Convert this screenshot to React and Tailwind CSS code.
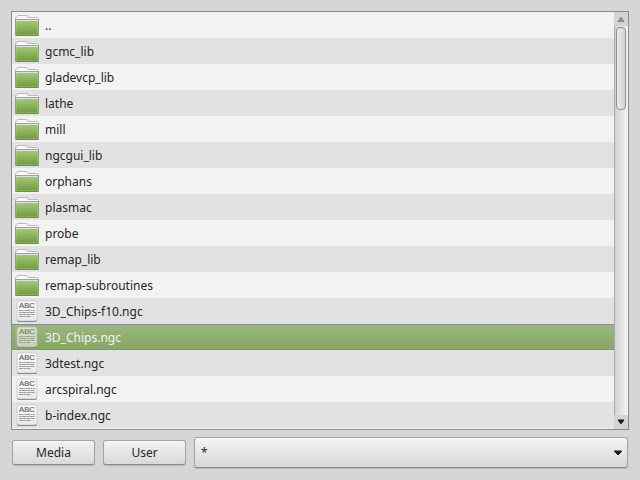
const ENTRIES = [
  '..', 'gcmc_lib', 'gladevcp_lib', 'lathe', 'mill', 'ngcgui_lib', 'orphans', 'plasmac',
  'probe', 'remap_lib', 'remap-subroutines', '3D_Chips-f10.ngc', '3D_Chips.ngc',
  '3dtest.ngc', 'arcspiral.ngc', 'b-index.ngc',
];
const SELECTED = '3D_Chips.ngc';

function FolderIcon() {
  return (
    <svg width="24" height="21" viewBox="0 0 24 21" className="block">
      <defs>
        <linearGradient id="folder" x1="0" y1="0" x2="0" y2="1">
          <stop offset="0" stopColor="#a3c877" />
          <stop offset="1" stopColor="#709a3c" />
        </linearGradient>
      </defs>
      <path d="M.5 20V2.500H1.500L2.500.5H12L13 2.500H22.500L23.500 3.500V20" fill="#fbfbfb" stroke="#b9b9b9" />
      <rect x="1" y="5" width="22" height="1" fill="#dfe5d8" />
      <rect x="1" y="6" width="22" height="14" fill="url(#folder)" />
      <path d="M1.500 6V19.500H22.500V6" fill="none" stroke="#b5d58d" strokeOpacity=".3" />
      <path d="M.5 4V20.500H23.500V4" fill="none" stroke="#929a8a" />
      <path d="M0 4.500H24" stroke="#a0a0a0" />
      <path d="M1 20.500H23" stroke="#73875c" />
    </svg>
  );
}

function FileIcon({ selected }) {
  return (
    <svg width="24" height="24" viewBox="0 0 24 24" className={selected ? 'block opacity-65' : 'block'}>
      <defs>
        <linearGradient id="paper" x1="0" y1="0" x2="0" y2="1">
          <stop offset="0" stopColor="#fcfcfc" />
          <stop offset="1" stopColor="#e8e8e8" />
        </linearGradient>
      </defs>
      <rect x="2" y="3" width="20" height="20" rx="2.500" fill="#444" opacity=".8" />
      <rect x="2" y="2" width="20" height="20" rx="2.500" fill="url(#paper)" stroke="#c6c6c6" strokeWidth=".8" />
      <text x="4" y="8.800" textLength="16" lengthAdjust="spacingAndGlyphs" className="fill-[#666] stroke-[#666] stroke-[0.2px] font-['Liberation_Sans',sans-serif] text-[7px]">ABC</text>
      <g stroke="#858585" strokeWidth=".8">
        <path d="M4 11.500H20" strokeDasharray="4 .5 2 .5" />
        <path d="M4 13.500H20" strokeDasharray="2 .5 5 .5" />
        <path d="M4 15.500H20" strokeDasharray="3 .5 4 .5" />
        <path d="M4 17.500H16" strokeDasharray="4 .6 2 .6" />
      </g>
    </svg>
  );
}

function Row({ name, index }) {
  const selected = name === SELECTED;
  const isFile = name.endsWith('.ngc');
  const tone = selected
    ? 'bg-linear-to-b from-[#98b77b] to-[#88a667] border-y border-[#8b8b8b] text-[#f3f3f3]'
    : index % 2
      ? 'bg-[#e2e2e2] text-[#262626]'
      : 'bg-[#f2f2f2] text-[#262626]';
  return (
    <div className={`flex h-[26px] shrink-0 items-center pl-[3px] ${tone}`}>
      <div className={isFile ? 'h-6 w-6' : 'h-6 w-6 pt-[2px]'}>{isFile ? <FileIcon selected={selected} /> : <FolderIcon />}</div>
      <span className="ml-[6px] pt-[2px] leading-4 whitespace-pre">{name}</span>
    </div>
  );
}

const BUTTON =
  'flex items-center rounded-[3px] border border-[#a3a3a3] border-b-[#8a8a8a] bg-linear-to-b from-[#f3f3f3] to-[#d9d9d9] shadow-[0_1px_1px_#b5b5b5,inset_0_1px_0_#fbfbfb]';

export default function App() {
  return (
    <div className="flex h-[480px] w-[640px] flex-col overflow-hidden bg-[#d6d6d6] pt-[11px] pl-[11px] font-['Noto_Sans',sans-serif] text-[12px] text-[#262626]">
      <div className="flex h-[419px] w-[618px] shrink-0 border border-[#8b8b8b]">
        <div className="flex w-[602px] flex-col bg-[#f2f2f2]">
          {ENTRIES.map((name, i) => <Row key={name} name={name} index={i} />)}
        </div>
        <div className="flex w-[14px] flex-col">
          <div className="flex h-[14px] items-center justify-center bg-[#d3d3d3]">
            <svg width="8" height="6" viewBox="0 0 8 6"><path d="M1 5.500H7L4 1Z" fill="#8b8b8b" stroke="#8b8b8b" strokeLinejoin="round" /></svg>
          </div>
          <div className="flex flex-1 justify-end border-l border-[#a9a9a9] bg-linear-to-r from-[#d2d2d2] to-[#f4f4f4] pt-px pr-[2px]">
            <div className="h-[83px] w-[10px] rounded-[4px] border border-[#8f8f8f] bg-linear-to-r from-[#ececec] to-[#d2d2d2]" />
          </div>
          <div className="flex h-[14px] items-center justify-center bg-[#d3d3d3]">
            <svg width="8" height="6" viewBox="0 0 8 6"><path d="M1 1H7L4 4.800Z" fill="#151515" stroke="#151515" strokeLinejoin="round" /></svg>
          </div>
        </div>
      </div>
      <div className="mt-[7px] flex items-center pl-px">
        <button className={`${BUTTON} h-[25px] w-[83px] justify-center`}>Media</button>
        <button className={`${BUTTON} ml-2 h-[25px] w-[83px] justify-center`}>User</button>
        <div className={`${BUTTON} ml-2 h-[31px] w-[434px] justify-between pr-[4px] pl-[6px]`}>
          <span>*</span>
          <svg width="10" height="6" viewBox="0 0 10 6"><path d="M1.300 1H8.700L5 5Z" fill="#151515" stroke="#151515" strokeLinejoin="round" /></svg>
        </div>
      </div>
    </div>
  );
}
